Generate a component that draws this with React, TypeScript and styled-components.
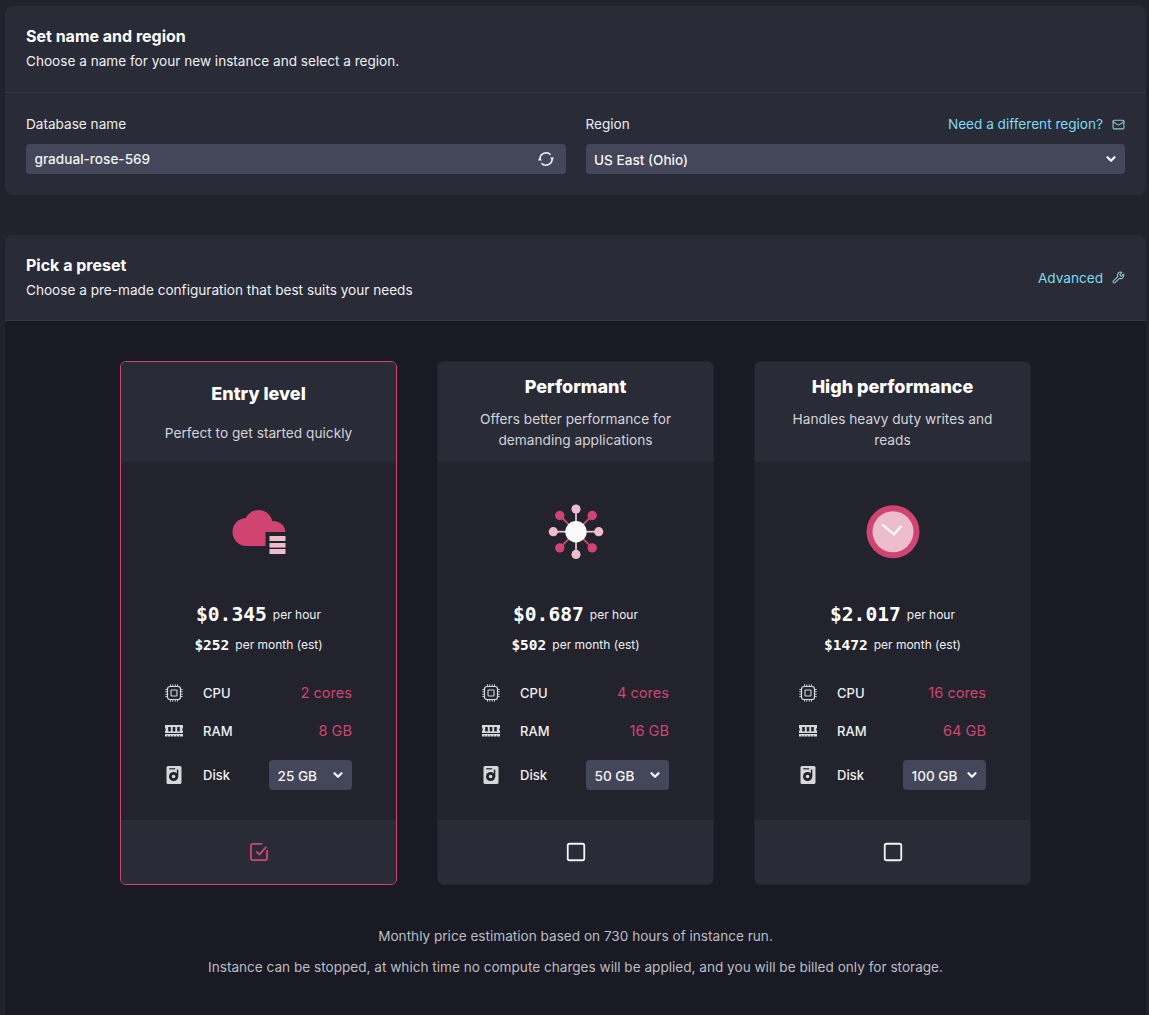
import React from 'react'
import styled, { createGlobalStyle } from 'styled-components'
import { ChevronDown, Mail, Square, Wrench } from 'lucide-react'

const PINK = '#cf4471'
const PALE = '#edbccd'
const CARD_BODY = '#22232c'

const GlobalStyle = createGlobalStyle`
  html, body {
    margin: 0;
    height: 1015px;
    overflow: hidden;
    background: #21222b;
    color: #f4f4f6;
    font-family: Inter, "Noto Sans", sans-serif;
  }
  * { box-sizing: border-box; }
`

const Page = styled.div`
  display: flex;
  flex-direction: column;
  gap: 40px;
  padding: 6px 3px 0 5px;
`
const Panel = styled.section`
  background: #292b37;
  border-radius: 8px 8px 0 0;
  &:first-child { border-radius: 8px; }
`
const PanelHeader = styled.header<{ $tight?: boolean }>`
  display: flex;
  justify-content: space-between;
  align-items: center;
  padding: 20px 21px ${p => (p.$tight ? '20px' : '21px')};
  border-bottom: 1px solid #353743;
`
const Title = styled.h2`
  margin: 0 0 5px;
  font-size: 16px;
  line-height: 20px;
  font-weight: 700;
  color: #fff;
`
const Subtitle = styled.p`
  margin: 0;
  font-size: 13.6px;
  line-height: 20px;
  color: #f0f0f3;
`
const Fields = styled.div`
  display: grid;
  grid-template-columns: 1fr 1fr;
  gap: 20px;
  padding: 21px;
`
const Field = styled.div`
  display: flex;
  flex-direction: column;
  gap: 10px;
`
const LabelRow = styled.div`
  display: flex;
  justify-content: space-between;
  align-items: center;
  height: 20px;
`
const Label = styled.label`
  font-size: 13.6px;
  color: #ecedf0;
`
const CyanLink = styled.a`
  display: flex;
  align-items: center;
  gap: 9px;
  font-size: 13.6px;
  color: #7fdcf0;
  svg { color: #8fc9d8; }
`
const InputWrap = styled.div`
  position: relative;
  height: 30px;
`
const TextInput = styled.input`
  width: 100%;
  height: 100%;
  border: 0;
  border-radius: 4px;
  padding: 0 32px 0 8.5px;
  background: #444659;
  color: #f4f4f6;
  font: 500 13.6px Inter, sans-serif;
`
const Select = styled.select`
  appearance: none;
  width: 100%;
  height: 100%;
  border: 0;
  border-radius: 4px;
  padding: 1px 24px 0 8.5px;
  background: #444659;
  color: #f4f4f6;
  font: 500 13.6px Inter, sans-serif;
`
const FieldIcon = styled.span<{ $chevron?: boolean }>`
  position: absolute;
  top: 0;
  right: ${p => (p.$chevron ? '7px' : '12px')};
  height: 100%;
  display: flex;
  align-items: center;
  pointer-events: none;
`
const Presets = styled.div`
  background: #191a23;
  padding: 40px 0 0;
  height: 694px;
`
const Cards = styled.div`
  display: flex;
  justify-content: center;
  gap: 40px;
`
const Card = styled.article<{ $selected?: boolean }>`
  width: 277px;
  height: 524px;
  display: flex;
  flex-direction: column;
  border-radius: 6px;
  overflow: hidden;
  background: ${CARD_BODY};
  border: 1px solid ${p => (p.$selected ? PINK : CARD_BODY)};
`
const CardHeader = styled.header`
  height: 100px;
  padding: 0 30px;
  display: flex;
  flex-direction: column;
  justify-content: space-evenly;
  background: #292b37;
  text-align: center;
`
const CardTitle = styled.h3`
  margin: 0;
  padding-top: 2px;
  font-size: 18px;
  line-height: 24px;
  font-weight: 800;
  color: #fff;
`
const CardText = styled.p`
  margin: 0;
  font-size: 13.7px;
  line-height: 21px;
  color: #d3d3d8;
`
const CardBody = styled.div`
  flex: 1;
  display: flex;
  flex-direction: column;
  align-items: center;
  padding: 41px 44px 0;
`
const IconBox = styled.div`
  height: 60px;
  svg { display: block; }
`
const PriceRow = styled.div<{ $month?: boolean }>`
  display: flex;
  align-items: center;
  justify-content: center;
  gap: 6px;
  height: ${p => (p.$month ? '20px' : '24px')};
  margin-top: ${p => (p.$month ? '8px' : '40px')};
  line-height: ${p => (p.$month ? '20px' : '24px')};
  font-size: 12px;
  color: #f0f0f3;
`
const Amount = styled.strong<{ $month?: boolean }>`
  font-family: "DejaVu Sans Mono", "Liberation Mono", monospace;
  font-weight: 700;
  font-size: ${p => (p.$month ? '14.5px' : '19.6px')};
  color: #fff;
`
const Specs = styled.div`
  align-self: stretch;
  margin-top: 23px;
  display: flex;
  flex-direction: column;
  gap: 8px;
`
const Spec = styled.div<{ $disk?: boolean }>`
  display: flex;
  align-items: center;
  height: 30px;
  margin-top: ${p => (p.$disk ? '6px' : '0')};
`
const SpecIcon = styled.span`
  width: 18px;
  height: 18px;
  margin-right: 20px;
  svg { display: block; }
`
const SpecName = styled.span`
  font-size: 13px;
  font-weight: 500;
  color: #f0f0f3;
`
const SpecValue = styled.span`
  margin-left: auto;
  font-size: 14.6px;
  color: ${PINK};
`
const DiskWrap = styled(InputWrap)`
  margin-left: auto;
  width: 83px;
`
const CardFooter = styled.footer`
  height: 64px;
  display: flex;
  align-items: center;
  justify-content: center;
  background: #292b37;
`
const Notes = styled.div`
  margin-top: 41px;
  text-align: center;
  font-size: 13.6px;
  line-height: 21px;
  color: #bcbcc2;
  p { margin: 0 0 10px; }
`

const RefreshIcon = () => (
  <svg width="16" height="16" viewBox="0 0 16 16" fill="none" stroke="#f4f4f6" strokeWidth="1.5">
    <path d="M1.9 7.6A6.2 6.2 0 0 1 12.6 3.8" />
    <path d="M14.1 8.4A6.2 6.2 0 0 1 3.4 12.2" />
    <path d="M12.2 6.6h3.8L14.1 10z" fill="#f4f4f6" stroke="none" />
    <path d="M0 9.4h3.8L1.9 6z" fill="#f4f4f6" stroke="none" />
  </svg>
)

const CheckedIcon = () => (
  <svg width="22" height="22" viewBox="0 0 22 22" fill="none" stroke={PINK} strokeWidth="1.9">
    <path d="M19.1 9v8.1a2 2 0 0 1-2 2H4.9a2 2 0 0 1-2-2V4.9a2 2 0 0 1 2-2h9.5" />
    <path d="M8.2 10.5L11.5 13.5L18.2 5.8" />
  </svg>
)

const CloudIcon = () => (
  <svg width="58" height="60" viewBox="0 0 58 60">
    <g fill={PINK}>
      <circle cx="16.5" cy="29" r="14" />
      <circle cx="28.5" cy="21" r="14" />
      <circle cx="43.5" cy="30" r="12" />
      <rect x="16.5" y="28" width="27" height="15" />
    </g>
    <rect x="35.5" y="29" width="22.5" height="31" fill={CARD_BODY} />
    <g fill={PALE}>
      <rect x="39.5" y="33" width="16" height="5" />
      <rect x="39.5" y="40" width="16" height="4.6" />
      <rect x="39.5" y="46" width="16" height="5" />
    </g>
  </svg>
)

const HubIcon = () => {
  const pale = [[29, 6], [51.7, 28.7], [29, 51.4], [6.3, 28.7]]
  const pink = [[12.8, 12.5], [45.2, 12.5], [12.8, 44.9], [45.2, 44.9]]
  return (
    <svg width="58" height="60" viewBox="0 0 58 60">
      {pale.map(([x, y]) => (
        <g key={`${x}-${y}`}>
          <line x1="29" y1="28.7" x2={x} y2={y} stroke={PALE} strokeWidth="1.8" />
          <circle cx={x} cy={y} r="4.6" fill={PALE} />
        </g>
      ))}
      {pink.map(([x, y]) => (
        <g key={`${x}-${y}`}>
          <line x1="29" y1="28.7" x2={x} y2={y} stroke={PINK} strokeWidth="1.8" />
          <circle cx={x} cy={y} r="4.7" fill={PINK} />
        </g>
      ))}
      <circle cx="29" cy="28.7" r="10.7" fill="#fafafa" />
    </svg>
  )
}

const ClockIcon = () => (
  <svg width="58" height="60" viewBox="0 0 58 60">
    <circle cx="29" cy="28.7" r="26.5" fill={PINK} />
    <circle cx="29" cy="28.7" r="20.5" fill={PALE} />
    <path d="M18 21.4L30 31.4L37.3 23" fill="none" stroke="#fafafa" strokeWidth="2.4" />
  </svg>
)

const CpuIcon = () => (
  <svg viewBox="0 0 18 18" fill="none" stroke="#d8d8dc">
    <rect x="2.5" y="2.5" width="13" height="13" rx="2.5" strokeWidth="1.2" />
    <rect x="6" y="6" width="6" height="6" rx="0.8" strokeWidth="1.1" />
    <path d="M5.5 0.3v2M7.7 0.3v2M10.3 0.3v2M12.5 0.3v2M5.5 15.7v2M7.7 15.7v2M10.3 15.7v2M12.5 15.7v2M0.3 5.5h2M0.3 7.7h2M0.3 10.3h2M0.3 12.5h2M15.7 5.5h2M15.7 7.7h2M15.7 10.3h2M15.7 12.5h2" strokeWidth="0.9" />
  </svg>
)

const RamIcon = () => (
  <svg viewBox="0 0 18 18">
    <path d="M0 3h18v3.6h-.8v1.8h.8v6.1H0V8.4h.8V6.6H0z" fill="#d8d8dc" />
    <g fill={CARD_BODY}>
      <rect x="3.2" y="5" width="2.6" height="4.4" />
      <rect x="7.7" y="5" width="2.6" height="4.4" />
      <rect x="12.2" y="5" width="2.6" height="4.4" />
      <rect x="0" y="11" width="18" height="1" />
      <path d="M2 13.6h1v1H2zM5 13.6h1v1H5zM8 13.6h1v1H8zM11 13.6h1v1h-1zM14 13.6h1v1h-1z" />
    </g>
  </svg>
)

const DiskIcon = () => (
  <svg viewBox="0 0 18 18">
    <rect x="1.5" y="0" width="15" height="18" rx="1.6" fill="#d8d8dc" />
    <circle cx="8.6" cy="10.5" r="4.6" fill={CARD_BODY} />
    <circle cx="8.6" cy="10.5" r="1.8" fill="#d8d8dc" />
    <rect x="11.8" y="3.6" width="1.5" height="7" fill={CARD_BODY} />
    <rect x="4.2" y="2.2" width="6" height="1.2" fill={CARD_BODY} />
  </svg>
)

const presets = [
  {
    title: 'Entry level',
    text: 'Perfect to get started quickly',
    Icon: CloudIcon,
    hour: '$0.345',
    month: '$252',
    cpu: '2 cores',
    ram: '8 GB',
    disk: '25 GB',
    selected: true,
  },
  {
    title: 'Performant',
    text: 'Offers better performance for demanding applications',
    Icon: HubIcon,
    hour: '$0.687',
    month: '$502',
    cpu: '4 cores',
    ram: '16 GB',
    disk: '50 GB',
  },
  {
    title: 'High performance',
    text: 'Handles heavy duty writes and reads',
    Icon: ClockIcon,
    hour: '$2.017',
    month: '$1472',
    cpu: '16 cores',
    ram: '64 GB',
    disk: '100 GB',
  },
]

export default function App() {
  return (
    <Page>
      <GlobalStyle />
      <Panel>
        <PanelHeader>
          <div>
            <Title>Set name and region</Title>
            <Subtitle>Choose a name for your new instance and select a region.</Subtitle>
          </div>
        </PanelHeader>
        <Fields>
          <Field>
            <LabelRow>
              <Label>Database name</Label>
            </LabelRow>
            <InputWrap>
              <TextInput defaultValue="gradual-rose-569" />
              <FieldIcon>
                <RefreshIcon />
              </FieldIcon>
            </InputWrap>
          </Field>
          <Field>
            <LabelRow>
              <Label>Region</Label>
              <CyanLink>
                Need a different region?
                <Mail size={13} />
              </CyanLink>
            </LabelRow>
            <InputWrap>
              <Select defaultValue="us-east">
                <option value="us-east">US East (Ohio)</option>
              </Select>
              <FieldIcon $chevron>
                <ChevronDown size={14} strokeWidth={4} color="#f4f4f6" />
              </FieldIcon>
            </InputWrap>
          </Field>
        </Fields>
      </Panel>
      <Panel>
        <PanelHeader $tight>
          <div>
            <Title>Pick a preset</Title>
            <Subtitle>Choose a pre-made configuration that best suits your needs</Subtitle>
          </div>
          <CyanLink>
            Advanced
            <Wrench size={13} />
          </CyanLink>
        </PanelHeader>
        <Presets>
          <Cards>
            {presets.map(({ Icon, ...p }) => (
              <Card key={p.title} $selected={p.selected}>
                <CardHeader>
                  <CardTitle>{p.title}</CardTitle>
                  <CardText>{p.text}</CardText>
                </CardHeader>
                <CardBody>
                  <IconBox>
                    <Icon />
                  </IconBox>
                  <PriceRow>
                    <Amount>{p.hour}</Amount> per hour
                  </PriceRow>
                  <PriceRow $month>
                    <Amount $month>{p.month}</Amount> per month (est)
                  </PriceRow>
                  <Specs>
                    <Spec>
                      <SpecIcon>
                        <CpuIcon />
                      </SpecIcon>
                      <SpecName>CPU</SpecName>
                      <SpecValue>{p.cpu}</SpecValue>
                    </Spec>
                    <Spec>
                      <SpecIcon>
                        <RamIcon />
                      </SpecIcon>
                      <SpecName>RAM</SpecName>
                      <SpecValue>{p.ram}</SpecValue>
                    </Spec>
                    <Spec $disk>
                      <SpecIcon>
                        <DiskIcon />
                      </SpecIcon>
                      <SpecName>Disk</SpecName>
                      <DiskWrap>
                        <Select defaultValue={p.disk}>
                          <option>{p.disk}</option>
                        </Select>
                        <FieldIcon $chevron>
                          <ChevronDown size={14} strokeWidth={4} color="#f4f4f6" />
                        </FieldIcon>
                      </DiskWrap>
                    </Spec>
                  </Specs>
                </CardBody>
                <CardFooter>
                  {p.selected ? <CheckedIcon /> : <Square size={22} color="#f4f4f6" strokeWidth={2} />}
                </CardFooter>
              </Card>
            ))}
          </Cards>
          <Notes>
            <p>Monthly price estimation based on 730 hours of instance run.</p>
            <p>Instance can be stopped, at which time no compute charges will be applied, and you will be billed only for storage.</p>
          </Notes>
        </Presets>
      </Panel>
    </Page>
  )
}
